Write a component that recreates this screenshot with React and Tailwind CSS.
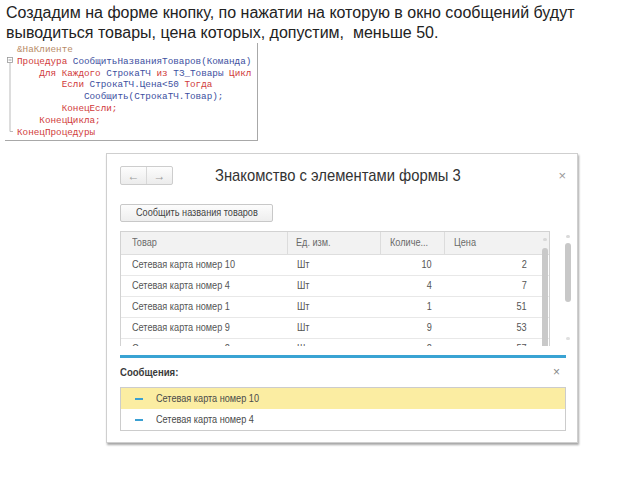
const kw = "text-[#d03a3a]";
const id = "text-[#3c4fa0]";

function N({ children, right }) {
  return (
    <span className={right ? "inline-block whitespace-nowrap scale-x-[0.87] origin-right" : "inline-block whitespace-nowrap scale-x-[0.87] origin-left"}>
      {children}
    </span>
  );
}

function CodeBlock() {
  return (
    <div className="ml-[5px] w-[253px] h-[98px] border-r border-b border-[#a8a8a8] flex">
      <div className="w-[12px] shrink-0">
        <svg width="12" height="98" viewBox="0 0 12 98">
          <rect x="2.5" y="14.5" width="5" height="5" fill="white" stroke="#999" strokeWidth="0.8" />
          <line x1="3.5" y1="17" x2="6.5" y2="17" stroke="#888" strokeWidth="0.8" />
          <line x1="5" y1="19.5" x2="5" y2="88.5" stroke="#aaa" strokeWidth="0.8" />
          <line x1="5" y1="88.5" x2="8" y2="88.5" stroke="#aaa" strokeWidth="0.8" />
        </svg>
      </div>
      <div className="font-['Liberation_Mono',monospace] text-[9.3px] leading-[11.8px] whitespace-pre pt-[1px]">
        <div className="text-[#b88a66]">&amp;НаКлиенте</div>
        <div><span className={kw}>Процедура</span> <span className={id}>СообщитьНазванияТоваров(Команда)</span></div>
        <div>{"    "}<span className={kw}>Для Каждого</span> <span className={id}>СтрокаТЧ</span> <span className={kw}>из</span> <span className={id}>ТЗ_Товары</span> <span className={kw}>Цикл</span></div>
        <div>{"        "}<span className={kw}>Если</span> <span className={id}>СтрокаТЧ.Цена&lt;50</span> <span className={kw}>Тогда</span></div>
        <div>{"            "}<span className={id}>Сообщить(СтрокаТЧ.Товар);</span></div>
        <div>{"        "}<span className={kw}>КонецЕсли;</span></div>
        <div>{"    "}<span className={kw}>КонецЦикла;</span></div>
        <div><span className={kw}>КонецПроцедуры</span></div>
      </div>
    </div>
  );
}

const rows = [
  ["Сетевая карта номер 10", "Шт", "10", "2"],
  ["Сетевая карта номер 4", "Шт", "4", "7"],
  ["Сетевая карта номер 1", "Шт", "1", "51"],
  ["Сетевая карта номер 9", "Шт", "9", "53"],
  ["Сетевая карта номер 2", "Шт", "2", "57"],
];

function Table() {
  return (
    <div className="relative w-[430px] h-[115px] overflow-hidden border-t border-l border-r border-[#d2d2d2] text-[10.5px]">
      <div className="grid grid-cols-[167px_93px_64px_104px] h-[23px] bg-[#f2f2f2] border-b border-[#dedede] text-[#6a6a6a]">
        <div className="flex items-center pl-[11px] border-r border-[#dcdcdc]"><N>Товар</N></div>
        <div className="flex items-center pl-[8px] border-r border-[#dcdcdc]"><N>Ед. изм.</N></div>
        <div className="flex items-center pl-[9px] border-r border-[#dcdcdc]"><N>Количе...</N></div>
        <div className="flex items-center pl-[9px]"><N>Цена</N></div>
      </div>
      {rows.map((r, i) => (
        <div key={i} className="grid grid-cols-[167px_93px_64px_104px] h-[21px] border-b border-[#e8e8e8] text-[#555]">
          <div className="flex items-center pl-[11px]"><N>{r[0]}</N></div>
          <div className="flex items-center pl-[9px]"><N>{r[1]}</N></div>
          <div className="flex items-center justify-end pr-[13px]"><N right>{r[2]}</N></div>
          <div className="flex items-center justify-end pr-[22px]"><N right>{r[3]}</N></div>
        </div>
      ))}
      <div className="absolute left-[422px] top-[6px] w-[4px] h-[3px] rounded-full bg-[#d8d8d8]" />
      <div className="absolute left-[421px] top-[16px] w-[6px] h-[100px] rounded-full bg-[#c9c9c9]" />
    </div>
  );
}

function Window() {
  return (
    <div className="ml-[106px] mt-[12px] w-[472px] h-[290px] border border-[#cfcfcf] bg-white shadow-[1px_2px_2px_rgba(0,0,0,0.35)] pl-[13px] flex flex-col">
      <div className="mt-[12px] h-[19px] flex items-center">
        <div className="w-[53px] h-[19px] border border-[#cdcdcd] rounded-[2px] bg-gradient-to-b from-[#fdfdfd] to-[#ececec] flex text-[#9a9a9a] text-[12px]">
          <div className="w-[26px] flex items-center justify-center border-r border-[#d8d8d8]">←</div>
          <div className="flex-1 flex items-center justify-center">→</div>
        </div>
        <div className="ml-[42px] text-[17px] text-[#333] leading-[19px] flex-1"><N>Знакомство с элементами формы 3</N></div>
        <div className="mr-[11px] text-[13px] text-[#999] leading-[19px]">×</div>
      </div>
      <div className="mt-[19px] w-[153px] h-[18px] border border-[#c8c8c8] rounded-[2px] bg-gradient-to-b from-[#fcfcfc] to-[#eeeeee] flex items-center pl-[15px] text-[10.5px] text-[#444]">
        <N>Сообщить названия товаров</N>
      </div>
      <div className="mt-[9px] flex">
        <Table />
        <div className="relative ml-[15px] w-[6px] h-[115px]">
          <div className="absolute left-[1px] top-[4px] w-[4px] h-[3px] rounded-full bg-[#dadada]" />
          <div className="absolute left-0 top-[12px] w-[6px] h-[59px] rounded-full bg-[#c8c8c8]" />
          <div className="absolute left-[1px] top-[106px] w-[4px] h-[3px] rounded-full bg-[#e0e0e0]" />
        </div>
      </div>
      <div className="mt-[9px] w-[446px] h-[3px] bg-[#39a3d3]" />
      <div className="mt-[6px] w-[446px] h-[16px] flex items-center justify-between text-[11px]">
        <span className="font-bold text-[#3a3a3a]"><N>Сообщения:</N></span>
        <span className="mr-[6px] text-[12px] text-[#888]">×</span>
      </div>
      <div className="mt-[7px] w-[446px] border border-[#cccccc] text-[10.5px] text-[#4a4a4a]">
        <div className="h-[21px] bg-[#fbeda2] flex items-center">
          <span className="ml-[14px] w-[8px] h-[2px] bg-[#3aa0d2]" />
          <span className="ml-[13px]"><N>Сетевая карта номер 10</N></span>
        </div>
        <div className="h-[21px] flex items-center">
          <span className="ml-[14px] w-[8px] h-[2px] bg-[#3aa0d2]" />
          <span className="ml-[13px]"><N>Сетевая карта номер 4</N></span>
        </div>
      </div>
    </div>
  );
}

export default function App() {
  return (
    <div className="w-[640px] h-[480px] bg-white overflow-hidden font-['Liberation_Sans',Arial,sans-serif]">
      <p className="pl-[6px] pt-[3px] text-[16px] leading-[20px] text-[#222]">
        Создадим на форме кнопку, по нажатии на которую в окно сообщений будут
        <br />
        выводиться товары, цена которых, допустим,&nbsp; меньше 50.
      </p>
      <CodeBlock />
      <Window />
    </div>
  );
}
